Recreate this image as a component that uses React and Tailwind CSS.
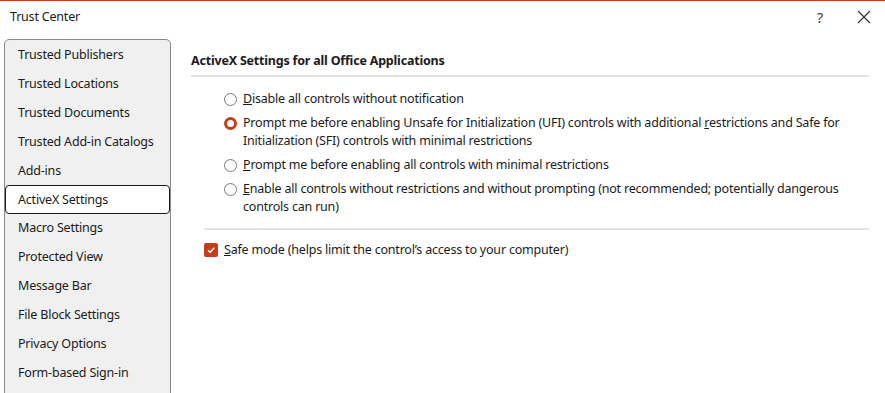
const navItems = [
    'Trusted Publishers',
    'Trusted Locations',
    'Trusted Documents',
    'Trusted Add-in Catalogs',
    'Add-ins',
    'ActiveX Settings',
    'Macro Settings',
    'Protected View',
    'Message Bar',
    'File Block Settings',
    'Privacy Options',
    'Form-based Sign-in',
];

const Radio = ({ checked }) => {
    return (
        <div
            className={
                checked
                    ? 'mt-[3px] h-[13px] w-[13px] shrink-0 rounded-full border-[3.5px] border-[#c43e1c] bg-white'
                    : 'mt-[3px] h-[13px] w-[13px] shrink-0 rounded-full border border-[#7a7a7a] bg-white'
            }
        />
    );
};

const Option = ({ checked, children }) => {
    return (
        <div className="flex gap-[6px] pl-[33px]">
            <Radio checked={checked} />
            <div className="leading-[18px]">{children}</div>
        </div>
    );
};

const App = () => {
    return (
        <div
            className="h-[393px] w-[885px] overflow-hidden bg-white text-[12.5px] tracking-[-0.2px] text-[#1b1b1b]"
            style={{ fontFamily: '"Noto Sans", sans-serif' }}
        >
            <div className="h-[1px] w-full bg-[#c43e1c]" />
            <div className="flex h-[38px] items-center justify-between pb-[6px] pl-[10px] pr-[14px]">
                <div>Trust Center</div>
                <div className="flex items-center gap-[34px]">
                    <div className="text-[15px] text-[#444]">?</div>
                    <svg width="14" height="14" viewBox="0 0 14 14">
                        <path d="M1 1 L13 13 M13 1 L1 13" stroke="#333" strokeWidth="1.2" />
                    </svg>
                </div>
            </div>
            <div className="flex h-full">
                <div className="ml-[4px] flex h-full w-[167px] shrink-0 flex-col rounded-t-[5px] border border-[#8a8a8a] bg-[#f0f0f0] pt-[1px]">
                    {navItems.map((item) => (
                        <div
                            key={item}
                            className={
                                item === 'ActiveX Settings'
                                    ? 'flex h-[28.9px] items-center rounded-[4px] border-[1.5px] border-[#1a1a1a] bg-white pl-[12px]'
                                    : 'flex h-[28.9px] items-center pl-[13px]'
                            }
                        >
                            {item}
                        </div>
                    ))}
                </div>
                <div className="flex flex-1 flex-col pl-[20px] pr-[16px]">
                    <div className="pt-[13px] font-bold leading-[18px]">
                        ActiveX Settings for all Office Applications
                    </div>
                    <div className="mt-[5px] h-[2px] bg-[#e3e3e3]" />
                    <div className="flex flex-col gap-[6px] pt-[13px]">
                        <Option>
                            <u>D</u>isable all controls without notification
                        </Option>
                        <Option checked>
                            Prompt me before enabling Unsafe for Initialization (UFI) controls with additional{' '}
                            <u>r</u>estrictions and Safe for
                            <br />
                            Initialization (SFI) controls with minimal restrictions
                        </Option>
                        <Option>
                            <u>P</u>rompt me before enabling all controls with minimal restrictions
                        </Option>
                        <Option>
                            <u>E</u>nable all controls without restrictions and without prompting (not recommended;
                            potentially dangerous
                            <br />
                            controls can run)
                        </Option>
                    </div>
                    <div className="ml-[13px] mt-[12px] h-[2px] bg-[#e3e3e3]" />
                    <div className="ml-[13px] mt-[11px] flex items-center gap-[6px]">
                        <div className="flex h-[14px] w-[14px] items-center justify-center rounded-[2px] bg-[#c43e1c]">
                            <svg width="10" height="10" viewBox="0 0 10 10">
                                <path d="M2 5.2 L4.2 7.3 L8.2 2.8" fill="none" stroke="white" strokeWidth="1.4" />
                            </svg>
                        </div>
                        <div className="leading-[18px]">
                            <u>S</u>afe mode (helps limit the control’s access to your computer)
                        </div>
                    </div>
                </div>
            </div>
        </div>
    );
};

export default App;
